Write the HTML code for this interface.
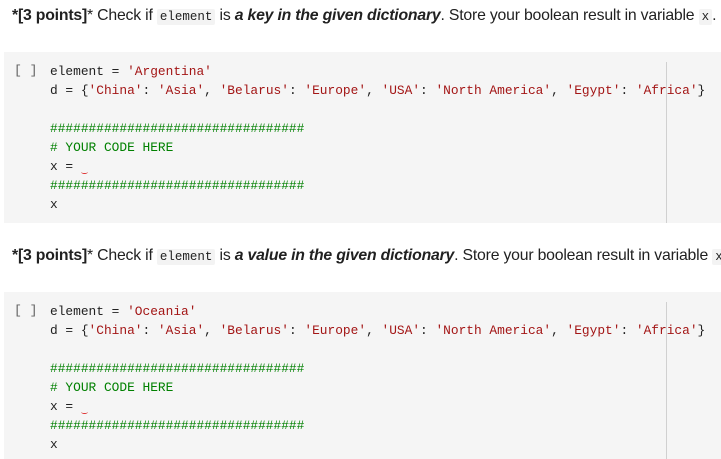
<!DOCTYPE html>
<html><head><meta charset="utf-8"><style>
body{margin:0;width:721px;height:459px;overflow:hidden;background:#fff;font-family:"Liberation Sans",sans-serif;}
.t{position:absolute;left:12px;white-space:nowrap;font-size:15.8px;color:#212121;letter-spacing:-0.2px}
.t code{font-family:"Liberation Mono",monospace;font-size:12.5px;background:#f3f3f3;padding:1px 3px;border-radius:2px;letter-spacing:0}
.cell{position:absolute;left:4px;width:717px;background:#f5f5f5;}
.vl{position:absolute;left:662px;top:10px;bottom:0;width:1px;background:#d0d0d0}
.br{position:absolute;left:10px;top:11px;font-family:"Liberation Mono",monospace;font-size:13px;color:#616161}
pre{position:absolute;left:46px;top:10px;margin:0;font-family:"Liberation Mono",monospace;font-size:12.85px;line-height:19px;color:#212121}
.s{color:#a31515}.c{color:#008000}
.sq{color:#e00;position:relative}
.sq:after{content:"";position:absolute;left:0;top:11px;width:7px;height:3px;border-bottom:1.5px solid #d33;border-radius:50%}
</style></head><body>
<div class="t" style="top:7px"><b>*[3 points]</b>* Check if <code>element</code> is <b><i>a key in the given dictionary</i></b>. Store your boolean result in variable <code>x</code>.</div>
<div class="cell" style="top:52px;height:171px">
<div class="br">[ ]</div><div class="vl"></div>
<pre>element = <span class="s">'Argentina'</span>
d = {<span class="s">'China'</span>: <span class="s">'Asia'</span>, <span class="s">'Belarus'</span>: <span class="s">'Europe'</span>, <span class="s">'USA'</span>: <span class="s">'North America'</span>, <span class="s">'Egypt'</span>: <span class="s">'Africa'</span>}

<span class="c">#################################</span>
<span class="c"># YOUR CODE HERE</span>
x = <span class="sq"> </span>
<span class="c">#################################</span>
x</pre></div>
<div class="t" style="top:247px"><b>*[3 points]</b>* Check if <code>element</code> is <b><i>a value in the given dictionary</i></b>. Store your boolean result in variable <code>x</code>.</div>
<div class="cell" style="top:292px;height:167px">
<div class="br">[ ]</div><div class="vl"></div>
<pre>element = <span class="s">'Oceania'</span>
d = {<span class="s">'China'</span>: <span class="s">'Asia'</span>, <span class="s">'Belarus'</span>: <span class="s">'Europe'</span>, <span class="s">'USA'</span>: <span class="s">'North America'</span>, <span class="s">'Egypt'</span>: <span class="s">'Africa'</span>}

<span class="c">#################################</span>
<span class="c"># YOUR CODE HERE</span>
x = <span class="sq"> </span>
<span class="c">#################################</span>
x</pre></div>
</body></html>
